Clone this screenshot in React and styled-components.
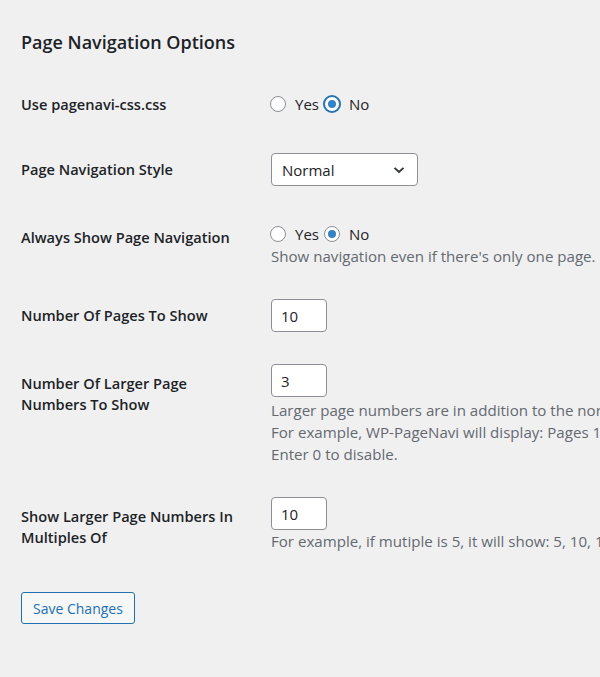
import React from "react";
import styled, { createGlobalStyle } from "styled-components";

const GlobalStyle = createGlobalStyle`
  body {
    margin: 0;
    background: #f0f0f1;
    color: #1d2327;
    font-family: "Open Sans", "Noto Sans", sans-serif;
    font-size: 14px;
    overflow: hidden;
  }
`;

const Wrap = styled.div`
  width: 600px;
  height: 677px;
  padding: 30px 0 0 21px;
  box-sizing: border-box;
  overflow: hidden;
`;

const Title = styled.h2`
  margin: 0;
  font-size: 18px;
  font-weight: 600;
  line-height: 24px;
`;

const Form = styled.div`
  margin-top: 18px;
`;

const Row = styled.div`
  display: grid;
  grid-template-columns: 250px 1fr;
  align-items: start;
`;

const Label = styled.div`
  padding: ${(p) => (p.$described ? "25px" : "22px")} 26px 22px 0;
  font-weight: 600;
  font-size: 14.6px;
  line-height: 21px;
`;

const Field = styled.div`
  padding: 16px 0;
  white-space: nowrap;
`;

const RadioGroup = styled.div`
  display: flex;
  align-items: center;
  height: 22px;
  margin-top: 5px;
  font-size: 15px;
`;

const RadioLabel = styled.label`
  display: inline-flex;
  align-items: center;
  margin-right: 6px;
`;

const Radio = styled.span`
  display: inline-block;
  box-sizing: border-box;
  width: 16px;
  height: 16px;
  margin: 0 9px 0 -1px;
  border-radius: 50%;
  background: #fff;
  border: 1px solid ${(p) => (p.$focus ? "#2271b1" : "#8c8f94")};
  box-shadow: ${(p) => (p.$focus ? "0 0 0 1px #2271b1" : "none")};
  position: relative;

  &::after {
    content: "";
    display: ${(p) => (p.$checked ? "block" : "none")};
    position: absolute;
    left: 3px;
    top: 3px;
    width: 8px;
    height: 8px;
    border-radius: 50%;
    background: #3582c4;
  }
`;

const Select = styled.div`
  box-sizing: border-box;
  width: 147px;
  height: 33px;
  display: flex;
  align-items: center;
  justify-content: space-between;
  padding: 0 12px 0 10px;
  background: #fff;
  border: 1px solid #8c8f94;
  border-radius: 4px;
  font-size: 15px;
`;

const Input = styled.div`
  box-sizing: border-box;
  width: 56px;
  height: 33px;
  display: flex;
  align-items: center;
  padding: 0 9px;
  background: #fff;
  border: 1px solid #8c8f94;
  border-radius: 4px;
  font-size: 15px;
`;

const Description = styled.p`
  margin: ${(p) => (p.$gap ? "2px" : "0")} 0 0;
  color: #646970;
  font-size: 15.1px;
  line-height: 22px;
`;

const Button = styled.button`
  margin-top: 22px;
  height: 32px;
  padding: 0 11px;
  background: #f6f7f7;
  border: 1px solid #2271b1;
  border-radius: 3px;
  color: #2271b1;
  font-family: inherit;
  font-size: 14px;
`;

const Chevron = () => (
  <svg width="12" height="8" viewBox="0 0 12 8" fill="none">
    <path d="M1.5 1.8 6 6 10.5 1.8" stroke="#2c3338" strokeWidth="1.8" />
  </svg>
);

const YesNo = ({ focus }) => (
  <RadioGroup>
    <RadioLabel>
      <Radio />
      Yes
    </RadioLabel>
    <RadioLabel>
      <Radio $checked $focus={focus} />
      No
    </RadioLabel>
  </RadioGroup>
);

export default function App() {
  return (
    <Wrap>
      <GlobalStyle />
      <Title>Page Navigation Options</Title>
      <Form>
        <Row>
          <Label>Use pagenavi-css.css</Label>
          <Field>
            <YesNo focus />
          </Field>
        </Row>
        <Row>
          <Label>Page Navigation Style</Label>
          <Field>
            <Select>
              Normal
              <Chevron />
            </Select>
          </Field>
        </Row>
        <Row>
          <Label $described>Always Show Page Navigation</Label>
          <Field>
            <YesNo />
            <Description>Show navigation even if there's only one page.</Description>
          </Field>
        </Row>
        <Row>
          <Label>Number Of Pages To Show</Label>
          <Field>
            <Input>10</Input>
          </Field>
        </Row>
        <Row>
          <Label $described>Number Of Larger Page Numbers To Show</Label>
          <Field>
            <Input>3</Input>
            <Description $gap>
              Larger page numbers are in addition to the normal page numbers. They are useful when there are many pages of posts.
              <br />
              For example, WP-PageNavi will display: Pages 1 of 50, 1, 2, 3, 4, 5, 10, 20, 30, 40, 50.
              <br />
              Enter 0 to disable.
            </Description>
          </Field>
        </Row>
        <Row>
          <Label $described>Show Larger Page Numbers In Multiples Of</Label>
          <Field>
            <Input>10</Input>
            <Description>For example, if mutiple is 5, it will show: 5, 10, 15, 20, 25</Description>
          </Field>
        </Row>
      </Form>
      <Button>Save Changes</Button>
    </Wrap>
  );
}
